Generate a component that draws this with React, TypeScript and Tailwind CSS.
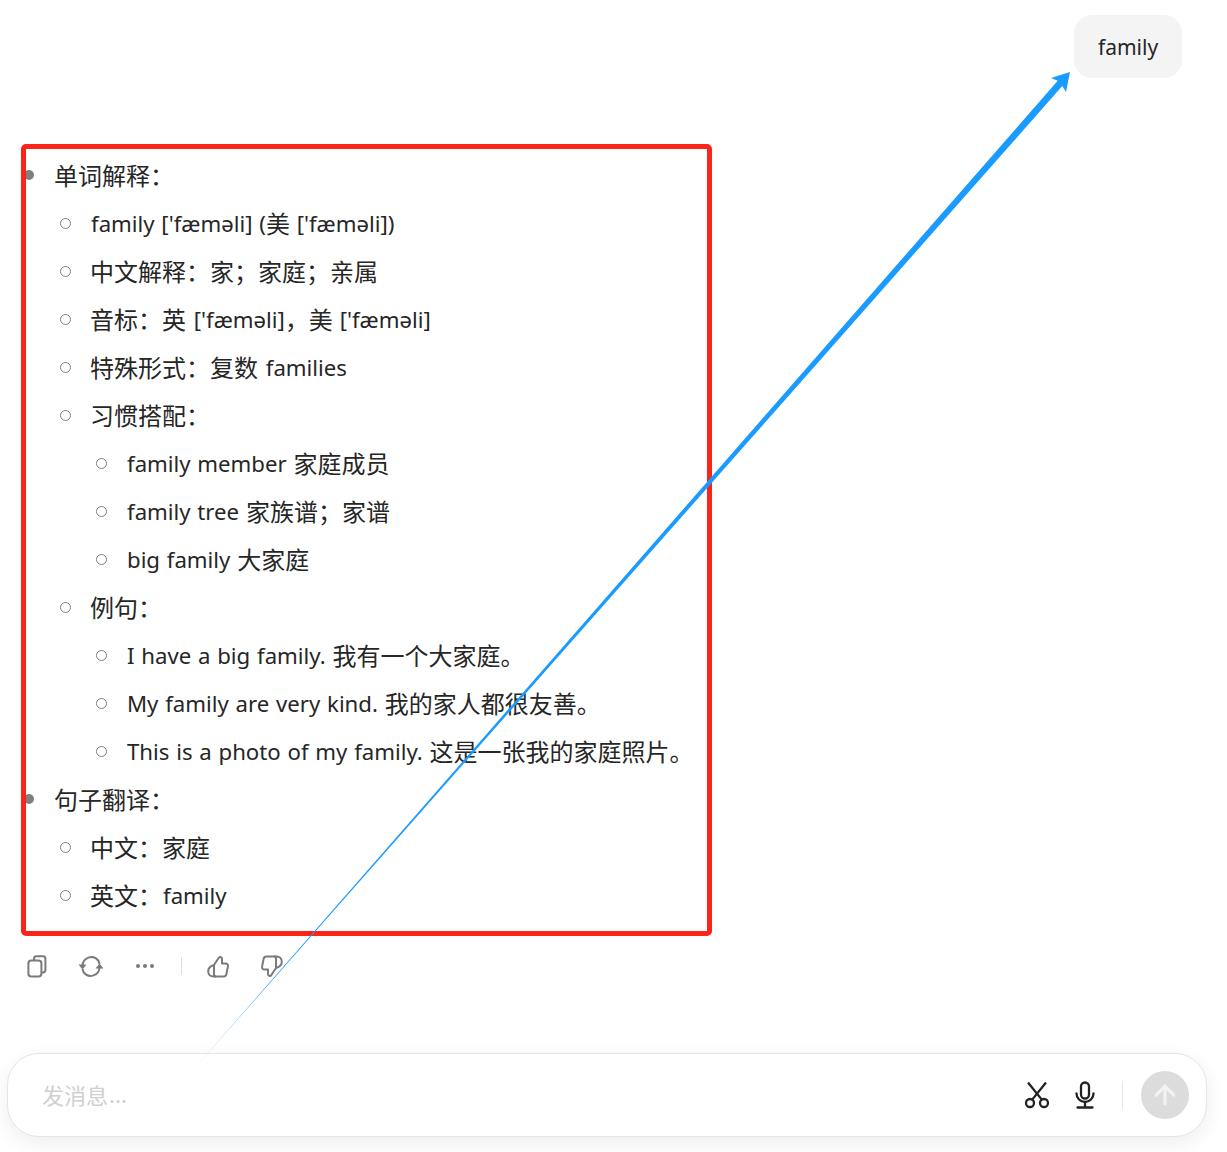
import React from "react";
import { ArrowUp } from "lucide-react";

const FONT = "font-['Noto_Sans','Noto_Sans_CJK_SC',sans-serif]";

// latin glyphs run wide in Noto, so they get a slightly smaller size
function L({ children }: { children: React.ReactNode }) {
  return <span className="align-[1px] text-[22.2px] [word-spacing:1px] first:ml-px">{children}</span>;
}

function Row({ level, children, solid }: { level: number; children: React.ReactNode; solid?: boolean }) {
  const pad = level === 0 ? "pl-[24px]" : level === 1 ? "pl-[60px]" : "pl-[96px]";
  return (
    <div className={`flex h-[48px] items-center ${pad}`}>
      {solid ? (
        <span className="mr-[21px] h-[10px] w-[10px] rounded-full bg-[#808080]" />
      ) : (
        <span className="mr-[20px] h-[11px] w-[11px] rounded-full border border-[#808080]" />
      )}
      <span className="-ml-px pt-[2px]">{children}</span>
    </div>
  );
}

function Copy() {
  return (
    <svg width="20" height="23" viewBox="0 0 20 23" fill="none" stroke="#7a7a7a" strokeWidth="2">
      <path d="M7 5.5V3.6a2.4 2.4 0 0 1 2.4-2.4h6.6a2.4 2.4 0 0 1 2.4 2.4v11.5a2.4 2.4 0 0 1-2.4 2.4h-1.5" />
      <rect x="1.4" y="5.5" width="13" height="16" rx="2.8" />
    </svg>
  );
}

function Refresh() {
  return (
    <svg width="26" height="23" viewBox="0 0 26 23" fill="none" stroke="#7a7a7a" strokeWidth="2">
      <path d="M4.5 11a8.8 8.8 0 0 1 15.8-5.4l1.2 3.4" />
      <path d="M21.5 12a8.8 8.8 0 0 1-15.8 5.4L4.5 14" />
      <path d="M0.5 9.5h8l-4 5z M17.5 13.5h8l-4-5z" fill="#7a7a7a" stroke="none" />
    </svg>
  );
}

function ThumbUp({ flip }: { flip?: boolean }) {
  return (
    <svg width="22" height="23" viewBox="0 0 22 23" fill="none" stroke="#7a7a7a" strokeWidth="2" strokeLinejoin="round" className={flip ? "rotate-180" : ""}>
      <path d="M7 10 11.6 3c.9-1.6 3.4-1.2 3.4.9V8.5h3.4c1.8 0 2.9 1.4 2.5 3l-1.5 7.6c-.3 1.5-1.3 2.4-2.8 2.4H9c-1.2 0-2-.8-2-2z" />
      <path d="M7 10.5H5.6C3 11.5 1.2 13.6 1.2 16.2c0 3 2.2 5.3 5.2 5.3H9" />
    </svg>
  );
}

function Scissors() {
  return (
    <svg width="26" height="28" viewBox="0 0 26 28" fill="none" stroke="#222" strokeWidth="2.3">
      <circle cx="6" cy="22" r="4" />
      <circle cx="20" cy="22" r="4" />
      <path d="M4 1.5 17.8 18.6M22 1.5 8.2 18.6" />
    </svg>
  );
}

function Mic() {
  return (
    <svg width="22" height="28" viewBox="0 0 22 28" fill="none" stroke="#222" strokeWidth="2.3" strokeLinecap="round">
      <rect x="7" y="1.5" width="8" height="16" rx="4" />
      <path d="M2.5 12.5a8.5 8.5 0 0 0 17 0M11 21.5v4.5M3.5 26.5h15" />
    </svg>
  );
}

export default function App() {
  return (
    <div className={`relative h-[1152px] w-[1227px] overflow-hidden bg-white text-[24px] text-[#262626] ${FONT}`}>
      {/* user message */}
      <div className="flex justify-end pr-[45px] pt-[15px]">
        <div className="flex h-[63px] w-[108px] items-center justify-center rounded-[18px] bg-[#f4f4f4] pt-[2px] text-[21px]">family</div>
      </div>

      {/* answer */}
      <div className="mt-[73px]">
        <Row level={0} solid>单词解释：</Row>
        <Row level={1}><L>family ['fæməli] (</L>美<L> ['fæməli])</L></Row>
        <Row level={1}>中文解释：家；家庭；亲属</Row>
        <Row level={1}>音标：英<L> ['fæməli]</L>，美<L> ['fæməli]</L></Row>
        <Row level={1}>特殊形式：复数<L> families</L></Row>
        <Row level={1}>习惯搭配：</Row>
        <Row level={2}><L>family member </L>家庭成员</Row>
        <Row level={2}><L>family tree </L>家族谱；家谱</Row>
        <Row level={2}><L>big family </L>大家庭</Row>
        <Row level={1}>例句：</Row>
        <Row level={2}><L>I have a big family. </L>我有一个大家庭。</Row>
        <Row level={2}><L>My family are very kind. </L>我的家人都很友善。</Row>
        <Row level={2}><L>This is a photo of my family. </L>这是一张我的家庭照片。</Row>
        <Row level={0} solid>句子翻译：</Row>
        <Row level={1}>中文：家庭</Row>
        <Row level={1}>英文：<L>family</L></Row>
      </div>

      {/* actions */}
      <div className="mt-[31px] flex h-[32px] items-center pl-[27px]">
        <Copy />
        <span className="ml-[31px]"><Refresh /></span>
        <span className="ml-[32px] flex gap-[3px]">
          <i className="h-[4px] w-[4px] rounded-full bg-[#7a7a7a]" />
          <i className="h-[4px] w-[4px] rounded-full bg-[#7a7a7a]" />
          <i className="h-[4px] w-[4px] rounded-full bg-[#7a7a7a]" />
        </span>
        <span className="ml-[27px] h-[18px] w-px bg-[#dddddd]" />
        <span className="ml-[25px]"><ThumbUp /></span>
        <span className="ml-[32px]"><ThumbUp flip /></span>
      </div>

      {/* input */}
      <div className="absolute bottom-[15px] left-[7px] flex h-[84px] w-[1200px] items-center rounded-[32px] border border-[#e5e5e5] bg-white pl-[34px] pr-[17px] shadow-[0_6px_20px_rgba(0,0,0,0.07)]">
        <span className="flex-1 text-[22px] text-[#d0d0d0]">发消息<L>...</L></span>
        <Scissors />
        <span className="ml-[24px]"><Mic /></span>
        <span className="ml-[26px] h-[28px] w-px bg-[#e5e5e5]" />
        <span className="ml-[18px] flex h-[48px] w-[48px] items-center justify-center rounded-full bg-[#dcdcdc]">
          <ArrowUp size={30} color="#f2f2f2" strokeWidth={2.6} />
        </span>
      </div>

      {/* annotation: red box */}
      <div className="absolute left-[21px] top-[144px] h-[792px] w-[691px] rounded-[5px] border-[5px] border-[#fb2418]" />

      {/* annotation: arrow */}
      <svg className="absolute inset-0" width="1227" height="1152" viewBox="0 0 1227 1152">
        <defs>
          <linearGradient id="fade" gradientUnits="userSpaceOnUse" x1="172" y1="1094" x2="270" y2="982">
            <stop offset="0" stopColor="#1a9bff" stopOpacity="0" />
            <stop offset="1" stopColor="#1a9bff" />
          </linearGradient>
        </defs>
        <polygon
          fill="url(#fade)"
          points="186,1078 1057.7,80.8 1051,78 1070,72 1066,92 1062.3,86"
        />
      </svg>
    </div>
  );
}
